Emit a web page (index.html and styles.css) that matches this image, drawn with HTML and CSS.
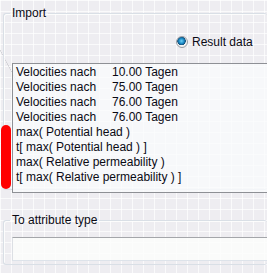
FILE: index.html
```html
<!DOCTYPE html>
<html>
<head>
<meta charset="utf-8">
<link rel="stylesheet" href="styles.css">
</head>
<body>
<div class="canvas">
  <fieldset class="group group-import">
    <legend class="group-title">Import</legend>
    <div class="radio-row">
      <span class="radio checked"></span>
      <span class="radio-label">Result data</span>
      <span class="radio"></span>
    </div>
    <div class="listbox">
      <div class="item"><span class="col1">Velocities nach</span><span>10.00 Tagen</span></div>
      <div class="item"><span class="col1">Velocities nach</span><span>75.00 Tagen</span></div>
      <div class="item"><span class="col1">Velocities nach</span><span>76.00 Tagen</span></div>
      <div class="item"><span class="col1">Velocities nach</span><span>76.00 Tagen</span></div>
      <div class="item">max( Potential head )</div>
      <div class="item">t[ max( Potential head ) ]</div>
      <div class="item">max( Relative permeability )</div>
      <div class="item">t[ max( Relative permeability ) ]</div>
    </div>
  </fieldset>
  <fieldset class="group group-attr">
    <legend class="group-title">To attribute type</legend>
    <div class="textbox"></div>
  </fieldset>
  <div class="marker"></div>
</div>
</body>
</html>
```
FILE: styles.css
```css
html, body {
  margin: 0;
  padding: 0;
  overflow: hidden;
  width: 267px;
  height: 273px;
}
body {
  font-family: "Liberation Sans", Arial, sans-serif;
  font-size: 12px;
  color: #0a0a14;
  background-color: #eeedf1;
  background-image:
    linear-gradient(to right, rgba(255,255,255,0.7) 1px, transparent 1px),
    linear-gradient(to bottom, rgba(255,255,255,0.7) 1px, transparent 1px);
  background-size: 11px 11px;
}
.canvas {
  position: relative;
  width: 267px;
  height: 273px;
  overflow: hidden;
  background-image:
    linear-gradient(62deg, transparent 49.6%, rgba(190,190,195,0.6) 49.8%, rgba(190,190,195,0.6) 50.2%, transparent 50.4%);
  background-size: 60px 110px;
  background-repeat: no-repeat;
  background-position: -22px 10px;
}
.group {
  margin: 0 0 0 3px;
  border: 1px solid #d9dfe6;
  border-radius: 3px;
  padding: 0 0 0 8px;
  min-width: 0;
  box-shadow: inset 1px 1px 0 rgba(255,255,255,0.8);
}
.group-title {
  padding: 0 2px;
  margin-left: -2px;
  line-height: 14px;
}
.group-import {
  margin-top: 6px;
  height: 182px;
  border-right: none;
}
.radio-row {
  display: flex;
  align-items: center;
  padding-left: 164px;
  margin-top: 15px;
  height: 14px;
  white-space: nowrap;
}
.radio {
  flex: none;
  width: 10px;
  height: 10px;
  border: 1px solid #9a9ea4;
  border-radius: 50%;
  background: radial-gradient(circle, #f4f4f4 0 60%, #e2e2e2 100%);
}
.radio.checked {
  background: radial-gradient(circle at 45% 40%, #6fd0f5 0, #1c8cc8 2.5px, #14507c 4px, #f4f4f4 4.5px, #e6e6e6 100%);
}
.radio-label {
  margin-left: 4px;
  margin-right: 15px;
}
.listbox {
  margin-top: 14px;
  width: 270px;
  border: 1px solid #8e9095;
  background: rgba(250,251,252,0.78);
  padding: 1px 0 0 3px;
  box-sizing: border-box;
  height: 130px;
  white-space: nowrap;
}
.item {
  height: 15px;
  line-height: 15px;
}
.col1 {
  display: inline-block;
  width: 96px;
}
.group-attr {
  margin-top: 23px;
  height: 50px;
  border-right: none;
}
.textbox {
  margin-top: 10px;
  width: 270px;
  height: 24px;
  box-sizing: border-box;
  border: 1px solid #a4a6aa;
  border-bottom-color: #dde3ea;
  border-left-color: #dcdfe4;
  background: rgba(252,253,252,0.85);
}
.marker {
  position: absolute;
  left: 1px;
  top: 125px;
  width: 10px;
  height: 64px;
  border-radius: 5px;
  background: #ff0000;
}
```
